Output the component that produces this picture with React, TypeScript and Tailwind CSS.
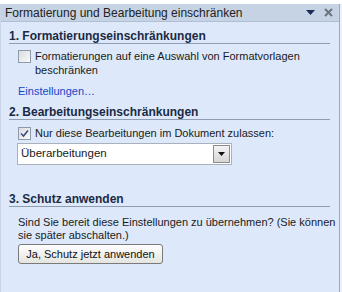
const FONT = "font-['Liberation_Sans',Arial,sans-serif]";

function Heading({ children, top }: { children: string; top: string }) {
    return (
        <div className={`${top} mx-[8px] mr-[9px] h-[15px] leading-[14px] border-b border-[#8f9db3] text-[12px] font-bold text-[#1b2a44]`}>
            {children}
        </div>
    );
}

function CheckBox({ checked }: { checked?: boolean }) {
    return (
        <div className="w-[13px] h-[13px] shrink-0 border border-[#8f9aa8] bg-gradient-to-br from-[#d8dbe0] to-[#fbfbfb] flex items-center justify-center">
            {checked && (
                <svg width="9" height="9" viewBox="0 0 9 9">
                    <path d="M1 4.5 L3.5 7 L8 1.5" fill="none" stroke="#3d4f7a" strokeWidth="1.6" />
                </svg>
            )}
        </div>
    );
}

export default function App() {
    return (
        <div className={`${FONT} w-[342px] h-[292px] bg-[#eef2f8] pr-[2px]`}>
            <div className="h-full bg-[#dde9fb] border-r border-l border-[#9aa8bc] border-l-[#c9d5e6] text-[#1a1a1a]">

                {/* Title bar */}
                <div className="mt-[4px] h-[18px] bg-[#c6d3e5] border-b border-[#b0bfd3] flex items-center pl-[4px] pr-[6px] text-[12px] text-[#222]">
                    <span>Formatierung und Bearbeitung einschränken</span>
                    <span className="ml-auto flex items-center gap-[9px]">
                        <svg width="9" height="5" viewBox="0 0 9 5">
                            <path d="M0 0 H9 L4.5 5 Z" fill="#1c2d55" />
                        </svg>
                        <svg width="9" height="9" viewBox="0 0 9 9">
                            <path d="M1 1 L8 8 M8 1 L1 8" stroke="#6b7480" strokeWidth="2" />
                        </svg>
                    </span>
                </div>

                {/* 1 */}
                <Heading top="mt-[7px]">1. Formatierungseinschränkungen</Heading>
                <div className="mt-[6px] ml-[17px] flex gap-[4px] text-[11px] leading-[14px]">
                    <CheckBox />
                    <span className="w-[270px] -mt-[1px]">Formatierungen auf eine Auswahl von Formatvorlagen beschränken</span>
                </div>
                <div className="mt-[7px] ml-[17px] text-[11px] leading-[14px] text-[#1646c8]">Einstellungen…</div>

                {/* 2 */}
                <Heading top="mt-[7px]">2. Bearbeitungseinschränkungen</Heading>
                <div className="mt-[7px] ml-[17px] flex gap-[4px] text-[11px] leading-[14px]">
                    <CheckBox checked />
                    <span className="-mt-[1px]">Nur diese Bearbeitungen im Dokument zulassen:</span>
                </div>
                <div className="mt-[3px] ml-[16px] w-[215px] h-[22px] bg-white border border-[#a9b1bc] flex items-center text-[11.5px]">
                    <span className="pl-[3px]">Überarbeitungen</span>
                    <div className="ml-auto mr-[1px] w-[17px] h-[18px] bg-gradient-to-b from-[#f4f4f4] to-[#d6d6d6] border border-[#8c8c8c] flex items-center justify-center">
                        <svg width="7" height="4" viewBox="0 0 7 4">
                            <path d="M0 0 H7 L3.5 4 Z" fill="#111" />
                        </svg>
                    </div>
                </div>

                {/* 3 */}
                <Heading top="mt-[27px]">3. Schutz anwenden</Heading>
                <div className="mt-[9px] ml-[17px] w-[320px] text-[11px] leading-[13px]">
                    Sind Sie bereit diese Einstellungen zu übernehmen? (Sie können sie später abschalten.)
                </div>
                <button className="mt-[2px] ml-[17px] w-[145px] h-[20px] rounded-[3px] border border-[#7a7a7a] bg-gradient-to-b from-[#ffffff] to-[#e4e4e0] text-[11px] text-[#111] flex items-center justify-center">
                    Ja, Schutz jetzt anwenden
                </button>
            </div>
        </div>
    );
}
